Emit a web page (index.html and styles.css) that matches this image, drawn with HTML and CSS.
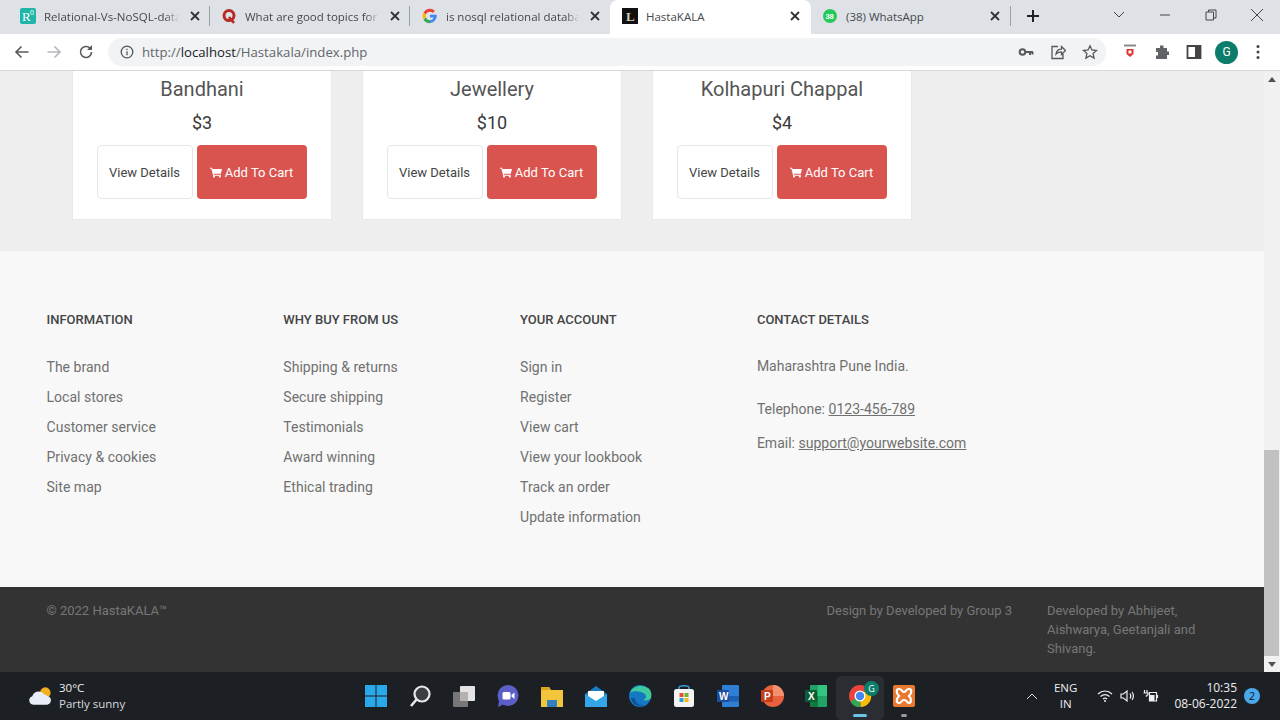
FILE: index.html
```html
<!DOCTYPE html>
<html lang="en">
<head>
<meta charset="utf-8">
<title>HastaKALA</title>
<link rel="stylesheet" href="styles.css">
</head>
<body>
<div class="tabstrip">
  <div class="tab tab-1">
    <svg class="fav" viewBox="0 0 16 16"><rect width="16" height="16" rx="2" fill="#1fb5a8"/><text x="2" y="13" class="fav-r">R</text><text x="10" y="7" class="fav-0">0</text></svg>
    <span class="tab-title">Relational-Vs-NoSQL-data</span>
    <svg class="tab-x" viewBox="0 0 10 10"><path d="M1 1l8 8M9 1l-8 8"/></svg>
  </div>
  <i class="tab-sep"></i>
  <div class="tab tab-2">
    <svg class="fav" viewBox="0 0 16 16"><circle cx="8" cy="7.6" r="5" fill="none" stroke="#b92b27" stroke-width="3"/><path d="M8 9l5 6" stroke="#b92b27" stroke-width="2.6"/></svg>
    <span class="tab-title">What are good topics for</span>
    <svg class="tab-x" viewBox="0 0 10 10"><path d="M1 1l8 8M9 1l-8 8"/></svg>
  </div>
  <i class="tab-sep"></i>
  <div class="tab tab-3">
    <svg class="fav" viewBox="0 0 16 16"><path d="M14.6 6.7H8v2.9h3.8A4 4 0 0 1 8 12.2V15a7 7 0 0 0 6.600-8.300z" fill="#4285f4"/><path d="M8 12.200a4.200 4.200 0 0 1-4-2.900L1.500 11.400A7.200 7.200 0 0 0 8 15.200z" fill="#34a853"/><path d="M4 9.300a4.300 4.300 0 0 1 0-2.700L1.500 4.600a7.200 7.200 0 0 0 0 6.800z" fill="#fbbc05"/><path d="M8 3.800c1.100 0 2 .4 2.800 1.100l2.100-2.100A7.200 7.200 0 0 0 1.500 4.600L4 6.600a4.200 4.200 0 0 1 4-2.800z" fill="#ea4335"/></svg>
    <span class="tab-title">is nosql relational databa</span>
    <svg class="tab-x" viewBox="0 0 10 10"><path d="M1 1l8 8M9 1l-8 8"/></svg>
  </div>
  <div class="tab tab-active">
    <svg class="fav" viewBox="0 0 16 16"><rect width="16" height="16" fill="#111"/><text x="4" y="13" class="fav-l">L</text></svg>
    <span class="tab-title">HastaKALA</span>
    <svg class="tab-x" viewBox="0 0 10 10"><path d="M1 1l8 8M9 1l-8 8"/></svg>
  </div>
  <div class="tab tab-5">
    <svg class="fav" viewBox="0 0 16 16"><circle cx="8" cy="8" r="7" fill="#25c95a"/><text x="3.400" y="11" class="fav-n">38</text></svg>
    <span class="tab-title">(38) WhatsApp</span>
    <svg class="tab-x" viewBox="0 0 10 10"><path d="M1 1l8 8M9 1l-8 8"/></svg>
  </div>
  <i class="tab-sep"></i>
  <svg class="newtab" viewBox="0 0 14 14"><path d="M7 1v12M1 7h12"/></svg>
  <div class="winctl">
    <svg class="wc wc-v" viewBox="0 0 12 8"><path d="M1 1l5 5 5-5"/></svg>
    <svg class="wc wc-min" viewBox="0 0 12 2"><path d="M1 1h10"/></svg>
    <svg class="wc wc-max" viewBox="0 0 12 12"><path d="M3.500 3V1h7.500v8h-2M1 3h7.500v8H1z"/></svg>
    <svg class="wc wc-close" viewBox="0 0 14 14"><path d="M1 1l12 12M13 1L1 13"/></svg>
  </div>
</div>

<div class="toolbar">
  <svg class="tb-ic nav-back" viewBox="0 0 16 16"><path d="M14.500 8H2M7.500 2.500L2 8l5.500 5.500"/></svg>
  <svg class="tb-ic nav-fwd" viewBox="0 0 16 16"><path d="M1.500 8H14M8.500 2.500L14 8l-5.500 5.500"/></svg>
  <svg class="tb-ic nav-reload" viewBox="0 0 16 16"><path d="M13.500 8a5.500 5.500 0 1 1-1.600-3.900"/><path class="solid" d="M14 1v5H9z"/></svg>
  <div class="omnibox">
    <svg class="info" viewBox="0 0 14 14"><circle cx="7" cy="7" r="5.800"/><path d="M7 6.200v4M7 3.800v1.200"/></svg>
    <span class="url">http://<b>localhost</b>/Hastakala/index.php</span>
    <div class="omni-right">
      <svg class="om-ic" viewBox="0 0 16 16"><circle cx="4.500" cy="8" r="2.800" class="ring"/><path d="M7 8h8M12 8v3M14.500 8v2.500" class="keyp"/></svg>
      <svg class="om-ic" viewBox="0 0 16 16"><path d="M8 2.500H2v12h11V10M6 10c.5-3 3-4.800 5.500-4.800V2.500L15.500 6.500l-4 4V7.800C9.500 7.800 7.500 8.500 6 10z"/></svg>
      <svg class="om-ic" viewBox="0 0 16 16"><path d="M8 1.800l1.900 4.200 4.600.5-3.400 3.100 1 4.500L8 11.800l-4.100 2.300 1-4.500L1.500 6.500l4.600-.5z"/></svg>
    </div>
  </div>
  <div class="ext">
    <svg class="ext-ic" viewBox="0 0 16 16"><path d="M2 1.500h12" stroke="#8a8a8a" stroke-width="2"/><path d="M4.500 5h7v5l-3.500 3-3.500-3z" fill="#d33"/><rect x="6.500" y="6.500" width="3" height="3" fill="#fff"/></svg>
    <svg class="ext-ic" viewBox="0 0 16 16"><path d="M6 1.500h3.500v2.500H13v3.500h2V11h-2v4H2v-3.500h2V8H2V4h4z" fill="#5f6368"/></svg>
    <svg class="ext-ic" viewBox="0 0 16 16"><path d="M1.500 2h13v12h-13z" fill="none" stroke="#444" stroke-width="1.800"/><rect x="9" y="2" width="5.500" height="12" fill="#444"/></svg>
    <span class="avatar">G</span>
    <svg class="ext-ic dots" viewBox="0 0 4 16"><circle cx="2" cy="2.500" r="1.500"/><circle cx="2" cy="8" r="1.500"/><circle cx="2" cy="13.500" r="1.500"/></svg>
  </div>
</div>

<div class="viewport">
  <main class="page">
    <section class="products">
      <article class="card">
        <h3 class="card-title">Bandhani</h3>
        <p class="price">$3</p>
        <div class="actions"><a class="btn btn-plain">View Details</a><a class="btn btn-red"><svg class="cart" viewBox="0 0 14 12"><path d="M0 .5h2.400l.5 1.500H14l-1.400 5.500H4.400l.3 1.200h8v1.100H3.700L1.600 1.600H0z"/><circle cx="4.700" cy="10.800" r="1.200"/><circle cx="11.500" cy="10.800" r="1.200"/></svg> Add To Cart</a></div>
      </article>
      <article class="card">
        <h3 class="card-title">Jewellery</h3>
        <p class="price">$10</p>
        <div class="actions"><a class="btn btn-plain">View Details</a><a class="btn btn-red"><svg class="cart" viewBox="0 0 14 12"><path d="M0 .5h2.400l.5 1.500H14l-1.400 5.500H4.400l.3 1.200h8v1.100H3.700L1.600 1.600H0z"/><circle cx="4.700" cy="10.800" r="1.200"/><circle cx="11.500" cy="10.800" r="1.200"/></svg> Add To Cart</a></div>
      </article>
      <article class="card">
        <h3 class="card-title">Kolhapuri Chappal</h3>
        <p class="price">$4</p>
        <div class="actions"><a class="btn btn-plain">View Details</a><a class="btn btn-red"><svg class="cart" viewBox="0 0 14 12"><path d="M0 .5h2.400l.5 1.500H14l-1.400 5.500H4.400l.3 1.200h8v1.100H3.700L1.600 1.600H0z"/><circle cx="4.700" cy="10.800" r="1.200"/><circle cx="11.500" cy="10.800" r="1.200"/></svg> Add To Cart</a></div>
      </article>
    </section>

    <footer class="links">
      <div class="col">
        <h4>INFORMATION</h4>
        <ul><li>The brand</li><li>Local stores</li><li>Customer service</li><li>Privacy &amp; cookies</li><li>Site map</li></ul>
      </div>
      <div class="col">
        <h4>WHY BUY FROM US</h4>
        <ul><li>Shipping &amp; returns</li><li>Secure shipping</li><li>Testimonials</li><li>Award winning</li><li>Ethical trading</li></ul>
      </div>
      <div class="col">
        <h4>YOUR ACCOUNT</h4>
        <ul><li>Sign in</li><li>Register</li><li>View cart</li><li>View your lookbook</li><li>Track an order</li><li>Update information</li></ul>
      </div>
      <div class="col col-contact">
        <h4>CONTACT DETAILS</h4>
        <p class="addr">Maharashtra Pune India.</p>
        <p class="tel">Telephone: <u>0123-456-789</u></p>
        <p class="mail">Email: <u>support@yourwebsite.com</u></p>
      </div>
    </footer>

    <div class="copyright">
      <span class="copy-left">© 2022 HastaKALA™</span>
      <span class="copy-mid">Design by Developed by Group 3</span>
      <span class="copy-right">Developed by Abhijeet, Aishwarya, Geetanjali and Shivang.</span>
    </div>
  </main>
  <div class="scrollbar">
    <svg class="sb-arrow sb-up" viewBox="0 0 8 5"><path d="M0 5l4-5 4 5z"/></svg>
    <div class="sb-track"><div class="sb-thumb"></div></div>
    <svg class="sb-arrow sb-down" viewBox="0 0 8 5"><path d="M0 0l4 5 4-5z"/></svg>
  </div>
</div>

<div class="taskbar">
  <div class="weather">
    <svg class="w-ic" viewBox="0 0 26 22"><circle cx="18" cy="7.500" r="5.500" fill="#f2b01e"/><path d="M5.500 20a4.500 4.500 0 0 1-1-8.800A7 7 0 0 1 17 9.500a4.500 4.500 0 0 1 3.500 1.700A4.500 4.500 0 0 1 20 20z" fill="#e9edf5"/></svg>
    <div class="w-text"><span>30°C</span><span class="w-sub">Partly sunny</span></div>
  </div>
  <div class="apps">
    <svg class="app" viewBox="0 0 24 24"><g fill="#29a8ea"><rect x="1" y="1" width="10.500" height="10.500"/><rect x="12.500" y="1" width="10.500" height="10.500"/><rect x="1" y="12.500" width="10.500" height="10.500"/><rect x="12.500" y="12.500" width="10.500" height="10.500"/></g></svg>
    <svg class="app" viewBox="0 0 24 24"><circle cx="14" cy="10" r="7.500" fill="#3a3d42" stroke="#e9e9e9" stroke-width="2.200"/><path d="M8.500 15.500L3 22" stroke="#e9e9e9" stroke-width="2.600"/></svg>
    <svg class="app" viewBox="0 0 24 24"><rect x="8" y="2" width="15" height="15" rx="1" fill="#e4e4e4"/><rect x="1" y="8" width="15" height="15" rx="1" fill="#777"/><rect x="8" y="8" width="8" height="9" fill="#b2b2b2"/></svg>
    <svg class="app" viewBox="0 0 24 24"><circle cx="12" cy="11.500" r="10.500" fill="#5b5fc7"/><path d="M3 17l-1 6 6-3z" fill="#5b5fc7"/><rect x="6.500" y="8" width="8" height="7.500" rx="1.500" fill="#fff"/><path d="M15.500 11l3-2.500v6.500l-3-2.500z" fill="#fff"/></svg>
    <svg class="app" viewBox="0 0 24 24"><path d="M1 3h8l2 3h12v17H1z" fill="#f3c53c"/><path d="M1 3h8l2 3H1z" fill="#d9a521"/><rect x="7" y="16" width="10" height="7" rx="1" fill="#2f7fc1"/></svg>
    <svg class="app" viewBox="0 0 24 24"><path d="M1 10l11-8 11 8v12H1z" fill="#1a7dc4"/><path d="M4 7h16v7l-8 5-8-5z" fill="#fff"/><path d="M1 10l11 7 11-7v13H1z" fill="#32a6e8"/></svg>
    <svg class="app" viewBox="0 0 24 24"><circle cx="12" cy="12" r="11" fill="#1578c2"/><path d="M2 9C4 2 14 0 20 4c3 2 4 6 3 10-1 2-5 3-8 2 3-1 4-4 2-6-3-3-12-4-15-1z" fill="#3ec9a0"/><path d="M7 14c0 5 5 9 11 7-6 3-14 0-15-7z" fill="#0e4f95"/></svg>
    <svg class="app" viewBox="0 0 24 24"><path d="M7 6V3.500C7 1 17 1 17 3.500V6" fill="none" stroke="#3aa0d8" stroke-width="1.500"/><rect x="2" y="5" width="20" height="18" rx="2.500" fill="#f3f3f3"/><rect x="7.500" y="9" width="4" height="4" fill="#e8502f"/><rect x="12.500" y="9" width="4" height="4" fill="#6fb52c"/><rect x="7.500" y="14" width="4" height="4" fill="#2a9fd8"/><rect x="12.500" y="14" width="4" height="4" fill="#f6b81a"/></svg>
    <svg class="app" viewBox="0 0 24 24"><rect x="6" y="1" width="17" height="22" rx="1" fill="#2f7fd6"/><rect x="6" y="12" width="17" height="5.500" fill="#1d5fb4"/><rect x="1" y="6" width="12" height="12" rx="1" fill="#1a4d9e"/><text x="3" y="15.500" class="app-l">W</text></svg>
    <svg class="app" viewBox="0 0 24 24"><circle cx="13" cy="12" r="11" fill="#e8613c"/><path d="M13 1a11 11 0 0 1 11 11H13z" fill="#f29170"/><rect x="1" y="6" width="12" height="12" rx="1" fill="#c43e1c"/><text x="4" y="15.500" class="app-l">P</text></svg>
    <svg class="app" viewBox="0 0 24 24"><rect x="6" y="1" width="17" height="22" rx="1" fill="#21a366"/><rect x="14" y="1" width="9" height="11" fill="#33c481"/><rect x="6" y="12" width="8" height="11" fill="#107c41"/><rect x="1" y="6" width="12" height="12" rx="1" fill="#0d5e32"/><text x="4" y="15.500" class="app-l">X</text></svg>
    <div class="app-chrome">
      <svg class="app" viewBox="0 0 24 24"><circle cx="12" cy="12" r="11" fill="#e8453c"/><path d="M12 12L2.500 17.500A11 11 0 0 0 13 23z" fill="#34a853"/><path d="M12 12l1 11A11 11 0 0 0 22.500 8H12z" fill="#fbbc05"/><circle cx="12" cy="12" r="5.500" fill="#fff"/><circle cx="12" cy="12" r="4.200" fill="#4285f4"/></svg>
      <span class="chrome-badge">G</span>
      <i class="run-long"></i>
    </div>
    <div class="app-xampp">
      <svg class="app" viewBox="0 0 24 24"><rect x="1" y="1" width="22" height="22" rx="2" fill="#e8792f"/><path d="M7 5c3 0 3 3 5 3s2-3 5-3 3 4 0 7c3 3 2 7 0 7s-2-3-5-3-2 3-5 3-3-4 0-7c-3-3-3-7 0-7z" fill="none" stroke="#fff" stroke-width="2.200"/></svg>
      <i class="run-short"></i>
    </div>
  </div>
  <div class="tray">
    <svg class="tr-chev" viewBox="0 0 12 7"><path d="M1 6l5-5 5 5"/></svg>
    <div class="lang"><span>ENG</span><span>IN</span></div>
    <svg class="tr-ic tr-wifi" viewBox="0 0 16 14"><path d="M1 5c4-4 10-4 14 0M3.500 7.500c3-2.500 6-2.500 9 0M6 10c1.300-1 2.700-1 4 0"/><circle class="fillw" cx="8" cy="12" r="1"/></svg>
    <svg class="tr-ic tr-vol" viewBox="0 0 16 14"><path d="M1 5h2.500L7 2v10L3.500 9H1zM10 4.500c1 1.500 1 3.500 0 5M12 3c1.800 2.500 1.800 5.500 0 8"/></svg>
    <svg class="tr-ic tr-bat" viewBox="0 0 16 14"><path d="M6.500 3.500h7v8.500h-7z"/><rect class="fillw" x="6.500" y="6" width="5" height="6"/><path d="M14.500 6v3"/><path d="M1.500 1v3M4 1v3M.5 4h4.500v1.500L2.800 7.500"/></svg>
    <div class="clock"><span>10:35</span><span>08-06-2022</span></div>
    <span class="notif">2</span>
  </div>
</div>
</body>
</html>
```
FILE: styles.css
```css
* { box-sizing: border-box; }
html, body { margin: 0; padding: 0; height: 720px; overflow: hidden; }
body { display: flex; flex-direction: column; font-family: Roboto, "Liberation Sans", sans-serif; color: #555; background: #eee; }

.tabstrip { height: 34px; background: #dee1e6; display: flex; align-items: center; flex: none; color: #45484c; padding-left: 10px; }
.tab { width: 199px; height: 34px; display: flex; align-items: center; gap: 8px; flex: none; padding-bottom: 2px; }
.tab-1 { padding: 0 9px 2px 10px; }
.tab-2 { padding: 0 9px 2px 11px; }
.tab-3 { width: 200px; padding: 0 10px 2px 12px; }
.tab-active { width: 201px; padding: 0 11px 2px 12px; background: #fff; border-radius: 8px 8px 0 0; }
.tab-5 { padding: 0 10px 2px 11px; }
.tab-sep { width: 1px; height: 20px; background: #9aa0a6; flex: none; margin-bottom: 2px; }
.tab-title { flex: 1; min-width: 0; white-space: nowrap; font-family: "Open Sans", "Liberation Sans", sans-serif; font-size: 11.500px; }
.tab-1 .tab-title, .tab-2 .tab-title, .tab-3 .tab-title { -webkit-mask-image: linear-gradient(to right, #000 88%, transparent 98%); mask-image: linear-gradient(to right, #000 88%, transparent 98%); }
.fav { width: 16px; height: 16px; flex: none; }
.fav-r { font: 13px "Liberation Serif", serif; fill: #fff; }
.fav-0 { font: 7px "Liberation Sans", sans-serif; fill: #fff; }
.fav-l { font: bold 13px "Liberation Serif", serif; fill: #d8cdb8; }
.fav-n { font: bold 7.500px "Liberation Sans", sans-serif; fill: #fff; }
.tab-x { width: 10px; height: 10px; flex: none; fill: none; stroke: #303336; stroke-width: 1.800; }
.newtab { width: 14px; height: 14px; margin-left: 15px; margin-bottom: 2px; fill: none; stroke: #222; stroke-width: 2; flex: none; }
.winctl { margin-left: auto; display: flex; align-items: center; height: 34px; }
.wc { fill: none; stroke: #444; stroke-width: 1; flex: none; margin-top: -4px; }
.wc-v { width: 12px; height: 8px; margin-right: 34px; }
.wc-min { width: 12px; height: 2px; margin-right: 34px; }
.wc-max { width: 12px; height: 12px; margin-right: 33px; }
.wc-close { width: 14px; height: 14px; margin-right: 16px; }

.toolbar { height: 37px; flex: none; background: #fff; border-bottom: 1px solid #d5d7da; display: flex; align-items: center; padding-left: 14px; }
.tb-ic { width: 16px; height: 16px; fill: none; stroke: #55585c; stroke-width: 1.600; flex: none; }
.nav-fwd { stroke: #b4b7bb; margin-left: 16px; }
.nav-reload { margin-left: 16px; }
.nav-reload .solid { fill: #55585c; stroke: none; }
.omnibox { margin-left: 14px; width: 998px; height: 28px; border-radius: 14px; background: #f1f3f4; display: flex; align-items: center; padding-left: 12px; flex: none; }
.info { width: 14px; height: 14px; fill: none; stroke: #55585c; stroke-width: 1.300; flex: none; }
.url { font-family: "Open Sans", "Liberation Sans", sans-serif; font-size: 13.200px; color: #62666a; margin-left: 8px; white-space: nowrap; }
.url b { font-weight: 400; color: #202124; }
.omni-right { margin-left: auto; display: flex; gap: 16px; padding-right: 8px; }
.om-ic { width: 16px; height: 16px; fill: none; stroke: #55585c; stroke-width: 1.300; flex: none; }
.om-ic .ring, .om-ic .keyp { stroke-width: 2; }
.ext { display: flex; align-items: center; margin-left: 16px; }
.ext-ic { width: 16px; height: 16px; margin-right: 16px; flex: none; }
.avatar { width: 23px; height: 23px; border-radius: 50%; background: #0b7d6a; color: #fff; font-size: 12px; display: flex; align-items: center; justify-content: center; margin-left: -3px; margin-right: 18px; flex: none; }
.dots { width: 4px; fill: #444; }

.viewport { flex: 1; min-height: 0; display: flex; }
.page { flex: 1; min-width: 0; display: flex; flex-direction: column; }
.products { height: 180px; flex: none; background: #eee; padding-left: 72px; display: flex; gap: 30px; align-items: flex-start; }
.card { width: 260px; height: 149px; background: #fff; border: 1px solid #e9e9e9; border-top: 0; text-align: center; padding-top: 5px; }
.card-title { margin: 0; font-weight: 400; font-size: 20px; line-height: 26px; color: #555; }
.price { margin: 8px 0 0; font-size: 18px; line-height: 26px; color: #3a3a3a; }
.actions { display: flex; justify-content: center; gap: 4px; margin-top: 9px; padding-right: 1px; }
.btn { height: 54px; display: flex; align-items: center; justify-content: center; font-size: 13px; border-radius: 4px; }
.btn-plain { width: 96px; background: #fff; border: 1px solid #e6e6e6; color: #444; }
.btn-red { width: 110px; background: #d9534f; color: #fff; }
.cart { width: 12px; height: 11px; fill: #fff; margin-right: 3px; }

.links { height: 336px; flex: none; background: #f8f8f8; padding: 61px 0 0 46.500px; display: grid; grid-template-columns: repeat(3, 236.800px) 1fr; }
.col h4 { margin: 0 0 25px; font-size: 13px; line-height: 15px; font-weight: 500; color: #444; }
.col ul { margin: 0; padding: 0; list-style: none; }
.col li { font-size: 14px; line-height: 30px; color: #707070; letter-spacing: .03px; }
.col p { margin: 0; font-size: 14px; line-height: 20px; color: #707070; letter-spacing: .01px; }
.col-contact h4 { margin-bottom: 29px; }
.col .tel { margin-top: 23px; }
.col .mail { margin-top: 14px; }

.copyright { height: 85px; flex: none; background: #333; display: flex; font-size: 13px; line-height: 19px; color: #777; padding: 14px 0 0 46.500px; }
.copy-left { flex: none; width: 780px; }
.copy-mid { flex: none; width: 220.500px; }
.copy-right { flex: none; width: 170px; }

.scrollbar { width: 16px; flex: none; background: #f1f1f1; display: flex; flex-direction: column; align-items: center; }
.sb-arrow { width: 8px; height: 5px; fill: #505050; flex: none; }
.sb-up { margin: 6px 0; }
.sb-down { margin: 6px 0 5px; }
.sb-track { flex: 1; width: 100%; display: flex; flex-direction: column; justify-content: flex-end; }
.sb-thumb { height: 206px; background: #c1c1c1; margin-right: 1px; }

.taskbar { height: 48px; flex: none; background: #1c2025; color: #eee; display: flex; align-items: center; position: relative; font-family: "Open Sans", "Liberation Sans", sans-serif; font-size: 12px; }
.weather { display: flex; align-items: center; gap: 6px; padding-left: 28px; position: absolute; left: 0; top: 0; height: 48px; }
.w-ic { width: 25px; height: 22px; }
.w-text { display: flex; flex-direction: column; line-height: 16px; font-size: 11.500px; }
.w-sub { color: #d8dadc; }
.apps { position: absolute; left: 364px; top: 12px; display: flex; gap: 20px; align-items: center; z-index: 0; }
.app { width: 24px; height: 24px; display: block; flex: none; }
.app-l { font: bold 10px "Liberation Sans", sans-serif; fill: #fff; }
.app-chrome, .app-xampp { position: relative; }
.chrome-badge { position: absolute; right: -7px; top: -3px; width: 15px; height: 15px; border-radius: 50%; background: #0b7d6a; color: #fff; font-size: 9px; display: flex; align-items: center; justify-content: center; }
.app-chrome::before { content: ""; position: absolute; left: -12px; right: -12px; top: -8px; height: 44px; border-radius: 5px; background: #2a2e33; z-index: -1; }
.run-long { position: absolute; left: 5px; top: 30px; width: 14px; height: 3px; border-radius: 2px; background: #6cc4e8; }
.run-short { position: absolute; left: 9px; top: 30px; width: 6px; height: 3px; border-radius: 2px; background: #9a9a9a; }
.tray { position: absolute; right: 0; top: 0; height: 48px; display: flex; align-items: center; }
.tr-chev { width: 12px; height: 7px; fill: none; stroke: #ddd; stroke-width: 1; margin-right: 16px; }
.lang { display: flex; flex-direction: column; align-items: center; line-height: 16px; font-size: 11.500px; margin-right: 20px; }
.tr-ic { width: 16px; height: 14px; fill: none; stroke: #eee; stroke-width: 1.200; flex: none; }
.tr-wifi { margin-right: 7px; }
.tr-vol { margin-right: 7px; }
.tr-bat { margin-right: 15px; }
.tr-ic .fillw { fill: #eee; stroke: none; }
.clock { display: flex; flex-direction: column; align-items: flex-end; line-height: 16px; font-size: 12px; margin-right: 7px; }
.notif { width: 16px; height: 16px; border-radius: 50%; background: #4aa8ec; color: #111; font-size: 10.500px; display: flex; align-items: center; justify-content: center; margin-right: 20px; }
```
